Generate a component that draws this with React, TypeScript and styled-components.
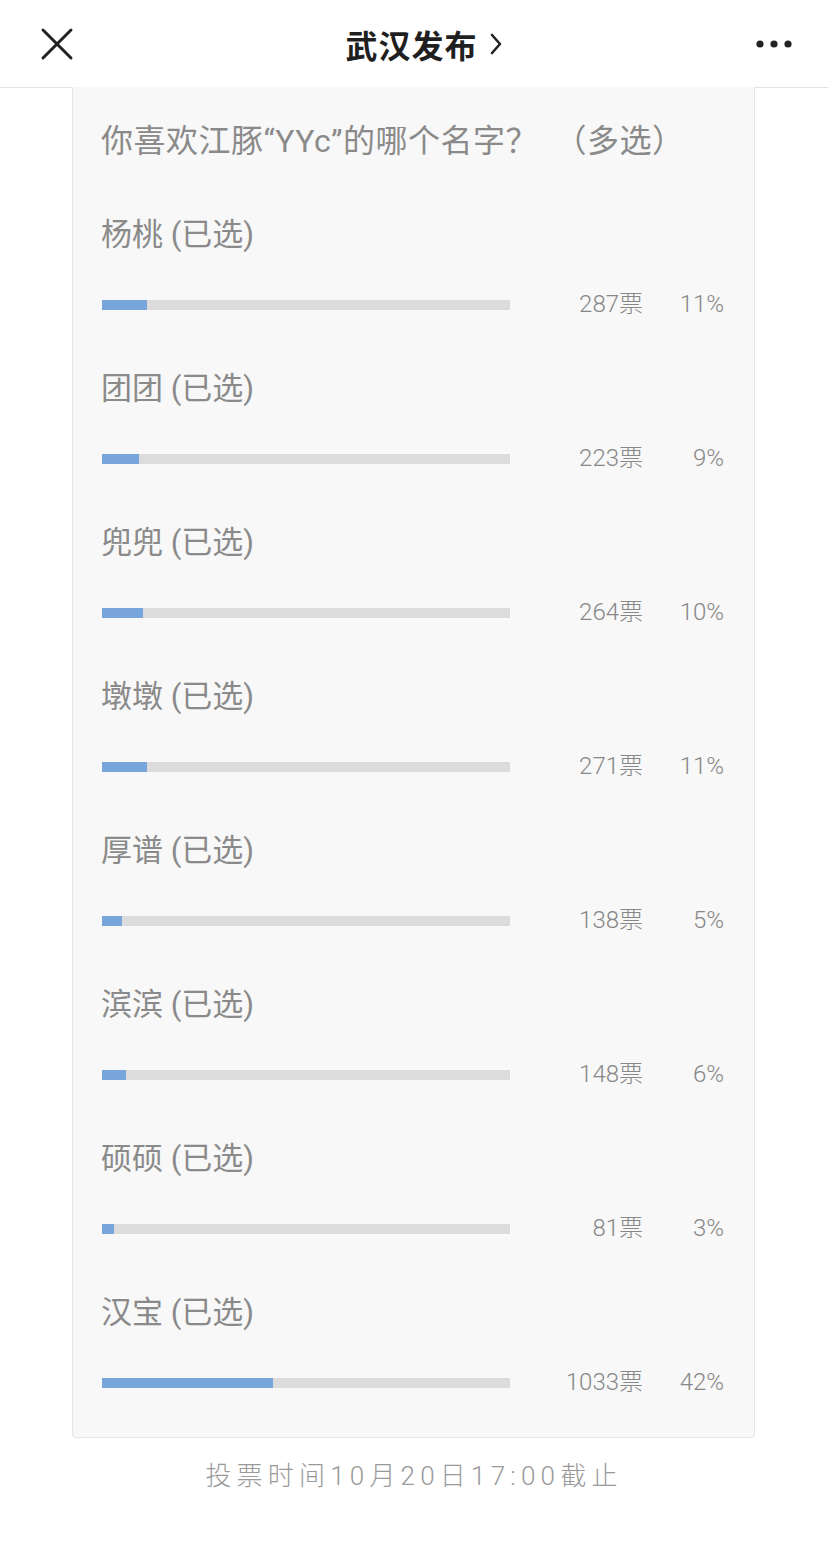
import React from "react";
import styled, { createGlobalStyle } from "styled-components";

const Global = createGlobalStyle`
  html, body { margin: 0; padding: 0; background: #ffffff; }
  body { font-family: Roboto, "Noto Sans CJK SC", sans-serif; }
  * { box-sizing: border-box; }
`;

const Page = styled.div`
  width: 828px;
  min-height: 1545px;
  background: #ffffff;
`;

const Header = styled.header`
  height: 88px;
  display: grid;
  grid-template-columns: 100px 1fr 100px;
  align-items: center;
  border-bottom: 1px solid #e3e3e3;
`;

const IconBtn = styled.div<{ $align: "start" | "end" }>`
  display: flex;
  justify-content: ${(p) => (p.$align === "start" ? "flex-start" : "flex-end")};
  padding: ${(p) => (p.$align === "start" ? "0 0 0 40px" : "0 36px 0 0")};
  align-items: center;
`;

const Title = styled.div`
  display: flex;
  justify-content: center;
  align-items: center;
  gap: 11px;
  padding-left: 20px;
  font-family: "Noto Sans CJK SC", sans-serif;
  font-weight: 700;
  font-size: 32px;
  color: #1f1f1f;
  letter-spacing: 1px;
`;

const Card = styled.section`
  margin: -1px 73px 0 72px;
  background: #f8f8f8;
  border: 1px solid #e6e6e6;
  border-top: none;
  border-radius: 0 0 4px 4px;
  padding: 34px 31px 39px 28px;
`;

const Question = styled.div`
  font-family: Roboto, "Noto Sans CJK SC", sans-serif;
  font-size: 32px;
  line-height: 40px;
  letter-spacing: 0.5px;
  color: #8a8a8a;
  margin-bottom: 5px;
  white-space: pre;
`;

const Option = styled.div`
  padding-top: 49px;
`;

const Label = styled.div`
  font-family: Roboto, "Noto Sans CJK SC", sans-serif;
  font-size: 31px;
  line-height: 40px;
  color: #8a8a8a;
  margin-bottom: 35px;
`;

const BarRow = styled.div`
  display: grid;
  grid-template-columns: 408px 133px 81px;
  align-items: center;
  height: 30px;
  padding-left: 1px;
`;

const Track = styled.div`
  height: 10px;
  background: #dcdcdc;
`;

const Fill = styled.div`
  height: 100%;
  background: #78a6dc;
`;

const Num = styled.div`
  text-align: right;
  font-family: Roboto, "Noto Sans CJK SC", sans-serif;
  font-weight: 300;
  font-size: 24px;
  line-height: 30px;
  margin-top: -3px;
  color: #878787;
`;

const Footer = styled.div`
  margin-top: 19px;
  text-align: center;
  font-family: Roboto, "Noto Sans CJK SC", sans-serif;
  font-weight: 300;
  font-size: 26px;
  line-height: 38px;
  letter-spacing: 5.2px;
  color: #9a9a9a;
`;

const options = [
  { name: "杨桃", votes: 287, pct: 11 },
  { name: "团团", votes: 223, pct: 9 },
  { name: "兜兜", votes: 264, pct: 10 },
  { name: "墩墩", votes: 271, pct: 11 },
  { name: "厚谱", votes: 138, pct: 5 },
  { name: "滨滨", votes: 148, pct: 6 },
  { name: "硕硕", votes: 81, pct: 3 },
  { name: "汉宝", votes: 1033, pct: 42 },
];

export default function App() {
  return (
    <Page>
      <Global />
      <Header>
        <IconBtn $align="start">
          <svg width="34" height="34" viewBox="0 0 34 34">
            <path d="M3 3 L31 31 M31 3 L3 31" stroke="#222" strokeWidth="3" strokeLinecap="round" fill="none" />
          </svg>
        </IconBtn>
        <Title>
          <span>武汉发布</span>
          <svg width="14" height="24" viewBox="0 0 14 24">
            <path d="M3 3 L11 12 L3 21" stroke="#222" strokeWidth="2.6" fill="none" strokeLinecap="round" strokeLinejoin="round" />
          </svg>
        </Title>
        <IconBtn $align="end">
          <svg width="36" height="10" viewBox="0 0 36 10">
            <circle cx="4" cy="5" r="3.6" fill="#222" />
            <circle cx="18" cy="5" r="3.6" fill="#222" />
            <circle cx="32" cy="5" r="3.6" fill="#222" />
          </svg>
        </IconBtn>
      </Header>
      <Card>
        <Question>你喜欢江豚“YYc”的哪个名字？　（多选）</Question>
        {options.map((o) => (
          <Option key={o.name}>
            <Label>{o.name} (已选)</Label>
            <BarRow>
              <Track>
                <Fill style={{ width: `${o.pct}%` }} />
              </Track>
              <Num>{o.votes}票</Num>
              <Num>{o.pct}%</Num>
            </BarRow>
          </Option>
        ))}
      </Card>
      <Footer>投票时间10月20日17:00截止</Footer>
    </Page>
  );
}
